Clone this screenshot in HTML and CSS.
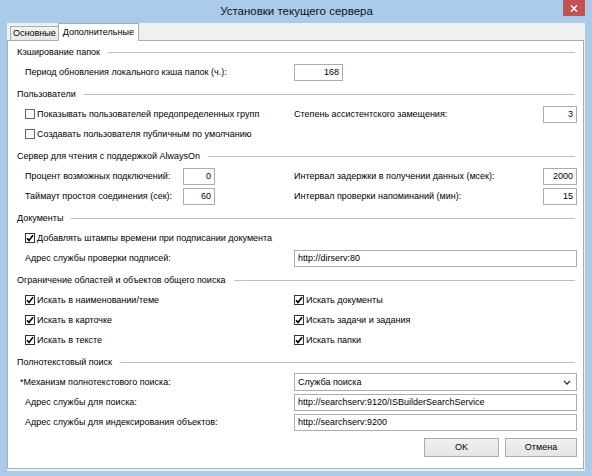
FILE: index.html
```html
<!DOCTYPE html>
<html lang="ru">
<head>
<meta charset="utf-8">
<title>Установки текущего сервера</title>
<link rel="stylesheet" href="styles.css">
</head>
<body>
<div class="window">
  <div class="titlebar">
    <span class="title">Установки текущего сервера</span>
    <div class="close"><svg width="8" height="7" viewBox="0 0 8 7"><path d="M1 0.5 L7 6.5 M7 0.5 L1 6.5" stroke="#fff" stroke-width="1.6"/></svg></div>
  </div>
  <div class="client">
    <div class="tabs">
      <div class="tab">Основные</div>
      <div class="tab active">Дополнительные</div>
    </div>
    <div class="page">
      <section class="group">
        <div class="ghead"><span>Кэширование папок</span></div>
        <div class="row">
          <span>Период обновления локального кэша папок (ч.):</span>
          <div class="tb num w49">168</div>
        </div>
      </section>

      <section class="group">
        <div class="ghead"><span>Пользователи</span></div>
        <div class="row">
          <div class="chk"><span class="box"></span>Показывать пользователей предопределенных групп</div>
          <div class="pair"><span>Степень ассистентского замещения:</span><div class="tb num w34">3</div></div>
        </div>
        <div class="row">
          <div class="chk"><span class="box"></span>Создавать пользователя публичным по умолчанию</div>
        </div>
      </section>

      <section class="group">
        <div class="ghead"><span>Сервер для чтения с поддержкой AlwaysOn</span></div>
        <div class="row">
          <div class="pair short"><span>Процент возможных подключений:</span><div class="tb num w32">0</div></div>
          <div class="pair"><span>Интервал задержки в получении данных (мсек):</span><div class="tb num w34">2000</div></div>
        </div>
        <div class="row">
          <div class="pair short"><span>Таймаут простоя соединения (сек):</span><div class="tb num w32">60</div></div>
          <div class="pair"><span>Интервал проверки напоминаний (мин):</span><div class="tb num w34">15</div></div>
        </div>
      </section>

      <section class="group">
        <div class="ghead"><span>Документы</span></div>
        <div class="row">
          <div class="chk wide"><span class="box checked"><svg width="8" height="8" viewBox="0 0 8 8"><path d="M1 4.2 L3 6.4 L7 1.3" fill="none" stroke="#000" stroke-width="1.6"/></svg></span>Добавлять штампы времени при подписании документа</div>
        </div>
        <div class="row">
          <span>Адрес службы проверки подписей:</span>
          <div class="tb">http://dirserv:80</div>
        </div>
      </section>

      <section class="group">
        <div class="ghead"><span>Ограничение областей и объектов общего поиска</span></div>
        <div class="row">
          <div class="chk"><span class="box checked"><svg width="8" height="8" viewBox="0 0 8 8"><path d="M1 4.2 L3 6.4 L7 1.3" fill="none" stroke="#000" stroke-width="1.6"/></svg></span>Искать в наименовании/теме</div>
          <div class="chk"><span class="box checked"><svg width="8" height="8" viewBox="0 0 8 8"><path d="M1 4.2 L3 6.4 L7 1.3" fill="none" stroke="#000" stroke-width="1.6"/></svg></span>Искать документы</div>
        </div>
        <div class="row">
          <div class="chk"><span class="box checked"><svg width="8" height="8" viewBox="0 0 8 8"><path d="M1 4.2 L3 6.4 L7 1.3" fill="none" stroke="#000" stroke-width="1.6"/></svg></span>Искать в карточке</div>
          <div class="chk"><span class="box checked"><svg width="8" height="8" viewBox="0 0 8 8"><path d="M1 4.2 L3 6.4 L7 1.3" fill="none" stroke="#000" stroke-width="1.6"/></svg></span>Искать задачи и задания</div>
        </div>
        <div class="row">
          <div class="chk"><span class="box checked"><svg width="8" height="8" viewBox="0 0 8 8"><path d="M1 4.2 L3 6.4 L7 1.3" fill="none" stroke="#000" stroke-width="1.6"/></svg></span>Искать в тексте</div>
          <div class="chk"><span class="box checked"><svg width="8" height="8" viewBox="0 0 8 8"><path d="M1 4.2 L3 6.4 L7 1.3" fill="none" stroke="#000" stroke-width="1.6"/></svg></span>Искать папки</div>
        </div>
      </section>

      <section class="group">
        <div class="ghead"><span>Полнотекстовый поиск</span></div>
        <div class="row">
          <span class="req">*Механизм полнотекстового поиска:</span>
          <div class="tb select"><span>Служба поиска</span><svg width="8" height="5" viewBox="0 0 8 5"><path d="M1 1 L4 4 L7 1" fill="none" stroke="#333" stroke-width="1.3"/></svg></div>
        </div>
        <div class="row">
          <span>Адрес службы для поиска:</span>
          <div class="tb">http://searchserv:9120/ISBuilderSearchService</div>
        </div>
        <div class="row">
          <span>Адрес службы для индексирования объектов:</span>
          <div class="tb">http://searchserv:9200</div>
        </div>
      </section>

      <div class="buttons">
        <div class="btn ok">OK</div>
        <div class="btn cancel">Отмена</div>
      </div>
    </div>
  </div>
</div>
</body>
</html>
```

FILE: styles.css
```css
* { box-sizing: border-box; margin: 0; padding: 0; }
html, body { width: 592px; height: 476px; overflow: hidden; }
body {
  background: #aacbe9;
  font-family: "Liberation Sans", Arial, sans-serif;
  font-size: 9px;
  color: #000;
}
.window { display: flex; flex-direction: column; height: 476px; }

.titlebar {
  height: 23px;
  display: grid;
  grid-template-columns: 1fr auto 1fr;
  align-items: center;
  padding: 0 7px 0 8px;
}
.title { grid-column: 2; font-size: 11.5px; color: #111; line-height: 23px; }
.close {
  grid-column: 3;
  justify-self: end;
  align-self: start;
  width: 22px;
  height: 16px;
  background: #c75050;
  display: flex;
  align-items: center;
  justify-content: center;
}

.client {
  flex: 1;
  margin: 0 7px 5px 7px;
  background: #f0f0f0;
  display: flex;
  flex-direction: column;
  padding: 0 1px 2px 0;
}

.tabs { height: 17px; display: flex; align-items: flex-end; padding-left: 3px; }
.tab {
  height: 14px;
  line-height: 13px;
  padding: 0 2px;
  border: 1px solid #acacac;
  border-bottom: 0;
  background: linear-gradient(#f3f3f3, #e8e8e8);
}
.tab.active {
  height: 18px;
  line-height: 16px;
  margin-bottom: -1px;
  margin-left: -1px;
  padding: 0 4px;
  background: #fff;
  position: relative;
  z-index: 1;
}

.page {
  flex: 1;
  background: #fff;
  border: 1px solid #acacac;
  padding: 1px 6px 0 9px;
}

.group + .group { margin-top: 2px; }
.ghead { height: 20px; display: flex; align-items: center; }
.ghead::after {
  content: "";
  flex: 1;
  height: 1px;
  background: #bdbdbd;
  margin: 1px 2px 0 8px;
}

.row {
  height: 20px;
  display: grid;
  grid-template-columns: 269px 283px;
  align-items: center;
  padding-left: 8px;
  white-space: nowrap;
}
.req { margin-left: -5px; }

.pair { display: flex; justify-content: space-between; align-items: center; }
.pair.short { width: 190px; }

.tb {
  height: 17px;
  border: 1px solid #abadb3;
  background: #fff;
  padding: 0 3px;
  line-height: 15px;
  overflow: hidden;
}
.num { text-align: right; }
.w49 { width: 49px; }
.w32 { width: 32px; }
.w34 { width: 34px; }
.select {
  height: 18px;
  display: flex;
  justify-content: space-between;
  align-items: center;
  padding-right: 5px;
}

.chk { display: flex; align-items: center; }
.chk.wide { grid-column: 1 / 3; }
.box {
  flex: 0 0 auto;
  width: 10px;
  height: 10px;
  border: 1px solid #666;
  background: #fff;
  margin-right: 2px;
  display: flex;
  align-items: center;
  justify-content: center;
}
.box.checked { border-color: #333; }

.buttons {
  margin-top: 6px;
  display: flex;
  justify-content: flex-end;
  gap: 6px;
}
.btn {
  height: 19px;
  line-height: 17px;
  text-align: center;
  border: 1px solid #acacac;
  background: linear-gradient(#f0f0f0, #e5e5e5);
}
.ok { width: 75px; }
.cancel { width: 72px; }
```
